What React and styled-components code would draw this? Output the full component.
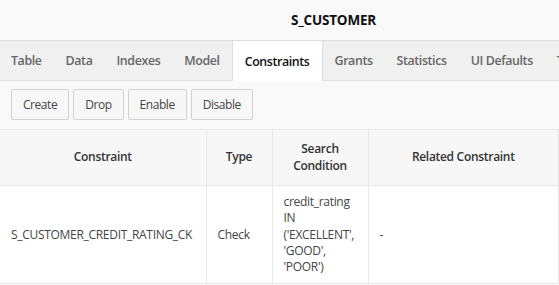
import React from 'react';
import styled, { createGlobalStyle } from 'styled-components';

const tabs = ['Table', 'Data', 'Indexes', 'Model', 'Constraints', 'Grants', 'Statistics', 'UI Defaults', 'Triggers'];
const actions = ['Create', 'Drop', 'Enable', 'Disable'];

export default function App() {
  return (
    <>
      <GlobalStyle />
      <Page>
        <TitleBar>
          <Title>S_CUSTOMER</Title>
        </TitleBar>
        <TabBar>
          {tabs.map((tab) => (
            <Tab key={tab} $active={tab === 'Constraints'}>
              {tab}
            </Tab>
          ))}
        </TabBar>
        <Toolbar>
          {actions.map((action) => (
            <Button key={action}>{action}</Button>
          ))}
        </Toolbar>
        <Table>
          <colgroup>
            <col style={{ width: 206 }} />
            <col style={{ width: 66 }} />
            <col style={{ width: 96 }} />
            <col />
          </colgroup>
          <thead>
            <tr>
              <th>Constraint</th>
              <th>Type</th>
              <th>
                Search
                <br />
                Condition
              </th>
              <th>Related Constraint</th>
            </tr>
          </thead>
          <tbody>
            <tr>
              <td>S_CUSTOMER_CREDIT_RATING_CK</td>
              <td>Check</td>
              <td>
                credit_rating IN ('EXCELLENT', 'GOOD', 'POOR')
              </td>
              <td>-</td>
            </tr>
          </tbody>
        </Table>
      </Page>
    </>
  );
}

const GlobalStyle = createGlobalStyle`
  body {
    margin: 0;
    background: #f9f9f9;
    font-family: 'Open Sans', 'Noto Sans', sans-serif;
    overflow: hidden;
  }
`;

const Page = styled.div`
  width: 559px;
  height: 285px;
  overflow: hidden;
  background: #f9f9f9;
`;

const TitleBar = styled.div`
  height: 40px;
  display: flex;
  align-items: center;
  padding-left: 291px;
`;

const Title = styled.h1`
  margin: 0;
  font-size: 13.5px;
  font-weight: 700;
  color: #111;
  letter-spacing: -0.2px;
`;

const TabBar = styled.div`
  display: flex;
  height: 39px;
  background: #f0f0f0;
  border-top: 1px solid #dedede;
  border-bottom: 1px solid #dedede;
  white-space: nowrap;
`;

const Tab = styled.div`
  display: flex;
  align-items: center;
  flex-shrink: 0;
  padding: 0 12px 0 ${({ $active }) => ($active ? '12px' : '11px')};
  margin-left: ${({ $active }) => ($active ? '0' : '1px')};
  font-size: 12.4px;
  font-weight: 600;
  letter-spacing: -0.38px;
  color: ${({ $active }) => ($active ? '#111' : '#666')};
  background: ${({ $active }) => ($active ? '#fff' : 'transparent')};
  border-left: ${({ $active }) => ($active ? '1px solid #dedede' : 'none')};
  border-right: ${({ $active }) => ($active ? '1px solid #dedede' : 'none')};
  margin-bottom: ${({ $active }) => ($active ? '-1px' : '0')};
  &:first-child {
    margin-left: 0;
  }
`;

const Toolbar = styled.div`
  display: flex;
  gap: 4px;
  padding: 8px 11px 9px;
`;

const Button = styled.button`
  height: 31px;
  padding: 0 11px;
  font-family: inherit;
  font-size: 12px;
  letter-spacing: -0.45px;
  color: #444;
  background: #f7f7f7;
  border: 1px solid #d2d2d2;
  border-radius: 2px;
`;

const Table = styled.table`
  width: 559px;
  border-collapse: collapse;
  table-layout: fixed;
  font-size: 12px;
  letter-spacing: -0.3px;

  th,
  td {
    border: 1px solid #e8e8e8;
    padding: 8px 11px;
    line-height: 16.3px;
  }

  th {
    height: 56px;
    box-sizing: border-box;
    background: #f7f7f7;
    font-weight: 600;
    color: #333;
    text-align: center;
  }

  td {
    background: #fff;
    color: #444;
    text-align: left;
  }

  th:first-child,
  td:first-child {
    border-left: none;
  }
`;
